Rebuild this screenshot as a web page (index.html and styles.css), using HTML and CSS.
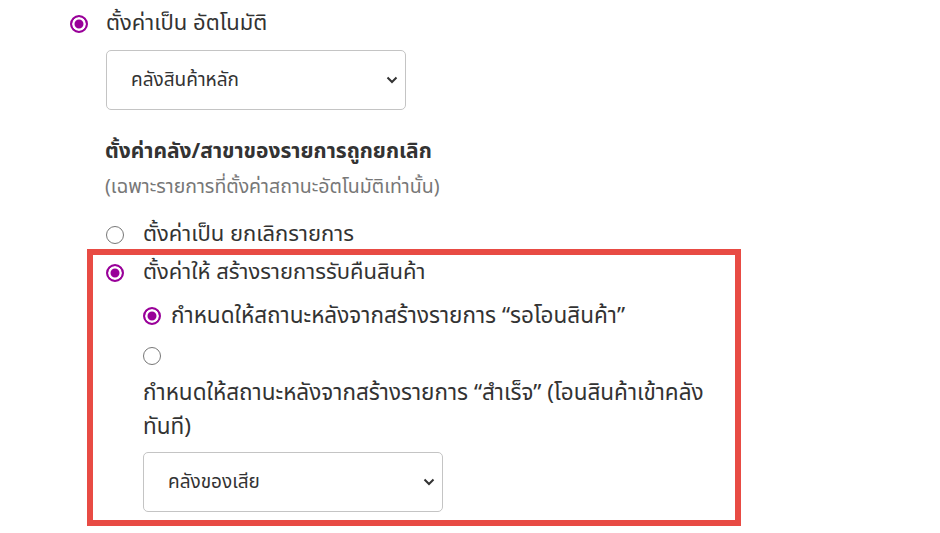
FILE: index.html
```html
<!DOCTYPE html>
<html lang="th">
<head>
    <meta charset="UTF-8">
    <meta name="viewport" content="width=device-width, initial-scale=1.0">
    <title>ตั้งค่าคลังสินค้า</title>
    <link rel="stylesheet" href="styles.css">
</head>
<body>
    <div class="settings">
        <label class="option">
            <span class="radio checked"></span>
            <span>ตั้งค่าเป็น อัตโนมัติ</span>
        </label>
        <div class="select-box main-select">
            <span>คลังสินค้าหลัก</span>
            <svg class="chevron" width="12" height="8" viewBox="0 0 12 8"><path d="M1.5 1.5 L6 6 L10.5 1.5" fill="none" stroke="#333" stroke-width="2"/></svg>
        </div>

        <div class="cancel-section">
            <h3 class="section-title">ตั้งค่าคลัง/สาขาของรายการถูกยกเลิก</h3>
            <p class="section-note">(เฉพาะรายการที่ตั้งค่าสถานะอัตโนมัติเท่านั้น)</p>

            <label class="option cancel-option">
                <span class="radio"></span>
                <span>ตั้งค่าเป็น ยกเลิกรายการ</span>
            </label>

            <div class="highlight">
                <label class="option">
                    <span class="radio checked"></span>
                    <span>ตั้งค่าให้ สร้างรายการรับคืนสินค้า</span>
                </label>
                <div class="sub-options">
                    <label class="sub-option">
                        <span class="radio checked"></span>
                        <span>กำหนดให้สถานะหลังจากสร้างรายการ “รอโอนสินค้า”</span>
                    </label>
                    <div class="sub-option stacked">
                        <span class="radio"></span>
                    </div>
                    <p class="sub-text">กำหนดให้สถานะหลังจากสร้างรายการ “สำเร็จ” (โอนสินค้าเข้าคลัง ทันที)</p>
                    <div class="select-box return-select">
                        <span>คลังของเสีย</span>
                        <svg class="chevron" width="12" height="8" viewBox="0 0 12 8"><path d="M1.5 1.5 L6 6 L10.5 1.5" fill="none" stroke="#333" stroke-width="2"/></svg>
                    </div>
                </div>
            </div>
        </div>
    </div>
</body>
</html>
```

FILE: styles.css
```css
body {
    margin: 0;
    background: #fff;
    color: #333;
    font-family: "Noto Sans Thai", "Noto Sans", "Liberation Sans", sans-serif;
}
.settings {
    padding: 10px 0 0 70px;
}
.option {
    display: flex;
    align-items: center;
    gap: 18px;
    font-size: 22px;
    height: 28px;
    line-height: 28px;
}
.radio {
    box-sizing: border-box;
    width: 18px;
    height: 18px;
    border: 1.5px solid #777;
    border-radius: 50%;
    background: #fff;
    flex-shrink: 0;
}
.radio.checked {
    border: 2px solid #990099;
    box-shadow: inset 0 0 0 2.5px #fff;
    background: #990099;
}
.select-box {
    box-sizing: border-box;
    width: 300px;
    height: 60px;
    border: 1px solid #c4c4c4;
    border-radius: 5px;
    display: flex;
    align-items: center;
    justify-content: space-between;
    padding: 0 7px 0 24px;
    font-size: 19px;
}
.main-select {
    margin: 12px 0 0 36px;
}
.cancel-section {
    padding: 28px 0 0 35px;
}
.section-title {
    margin: 0;
    font-size: 21px;
    font-weight: bold;
    line-height: 28px;
}
.section-note {
    margin: 8px 0 0;
    font-size: 19.5px;
    color: #777;
    line-height: 26px;
}
.cancel-option {
    margin: 21px 0 0 1px;
    gap: 19px;
}
.highlight {
    width: 629px;
    margin-left: -18px;
    border: 6px solid #e84b44;
    padding: 4px 0 8px 13px;
}
.highlight .option {
    gap: 19px;
}
.sub-options {
    padding: 15px 0 0 37px;
}
.sub-option {
    display: flex;
    align-items: center;
    gap: 10px;
    font-size: 22.5px;
    height: 28px;
    line-height: 28px;
}
.stacked {
    margin-top: 12px;
}
.sub-text {
    margin: 6px 0 0;
    font-size: 22.5px;
    line-height: 34px;
}
.return-select {
    margin-top: 8px;
}
```
